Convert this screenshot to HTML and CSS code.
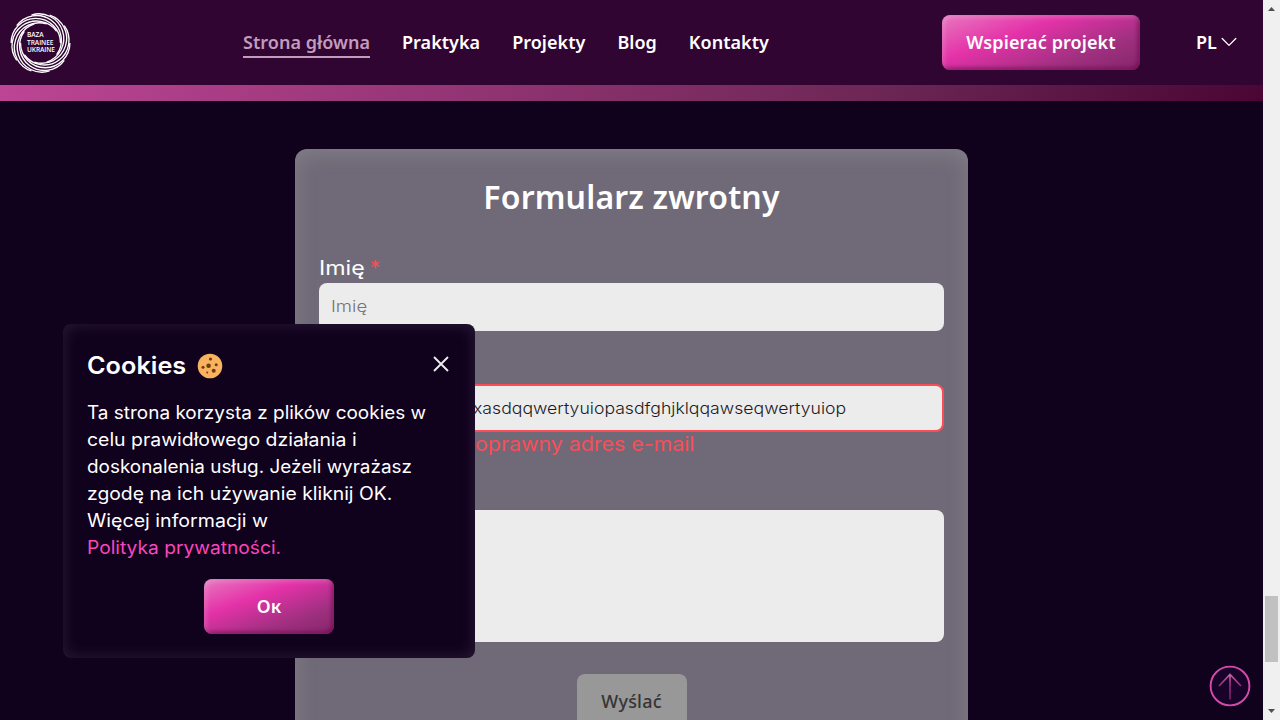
FILE: index.html
```html
<!DOCTYPE html>
<html lang="pl">
<head>
<meta charset="utf-8">
<title>Baza Trainee Ukraine</title>
<link rel="stylesheet" href="styles.css">
</head>
<body>
<div class="page">
  <header class="header">
    <svg class="logo" viewBox="0 0 60 60">
      <defs><path id="arc" d="M59.4 30A24.7 24.7 0 0 1 10 30"/></defs>
      <g fill="none" stroke="#fff" stroke-width="1.35">
        <use href="#arc"/>
        <use href="#arc" transform="rotate(36 30 30)"/>
        <use href="#arc" transform="rotate(72 30 30)"/>
        <use href="#arc" transform="rotate(108 30 30)"/>
        <use href="#arc" transform="rotate(144 30 30)"/>
        <use href="#arc" transform="rotate(180 30 30)"/>
        <use href="#arc" transform="rotate(216 30 30)"/>
        <use href="#arc" transform="rotate(252 30 30)"/>
        <use href="#arc" transform="rotate(288 30 30)"/>
        <use href="#arc" transform="rotate(324 30 30)"/>
      </g>
      <g class="logo-text">
        <text x="16.5" y="24" textLength="16.5">BAZA</text>
        <text x="16.5" y="31.8" textLength="26.5">TRAINEE</text>
        <text x="16.5" y="39.4" textLength="28">UKRAINE</text>
      </g>
    </svg>
    <nav class="nav">
      <a class="nav-link active">Strona główna</a>
      <a class="nav-link">Praktyka</a>
      <a class="nav-link">Projekty</a>
      <a class="nav-link">Blog</a>
      <a class="nav-link">Kontakty</a>
    </nav>
    <button class="btn btn-support">Wspierać projekt</button>
    <div class="lang"><span>PL</span>
      <svg width="16" height="10" viewBox="0 0 16 10" fill="none" stroke="#fff" stroke-width="1.3" stroke-linecap="round" stroke-linejoin="round"><path d="M1.2 1.5 8 8.4 14.8 1.5"/></svg>
    </div>
  </header>
  <div class="stripe"></div>
  <main class="main">
    <form class="form">
      <h1 class="form-title">Formularz zwrotny</h1>
      <label class="label"><span class="label-name">Imię</span><span class="required">*</span></label>
      <div class="field placeholder"><span class="field-name">Imię</span></div>
      <div class="field email"><span class="email-value">xasdqqwertyuiopasdfghjklqqawseqwertyuiop</span></div>
      <div class="error"><span class="error-text">oprawny adres e-mail</span></div>
      <div class="field message"></div>
      <button class="btn-send" type="button">Wyślać</button>
    </form>
  </main>
</div>
<aside class="scrollbar">
  <svg width="17" height="17" viewBox="0 0 17 17"><path d="M5 11 8.5 7 12 11Z" fill="#505050"/></svg>
  <div class="thumb"></div>
  <svg width="17" height="17" viewBox="0 0 17 17"><path d="M5 6 8.5 10 12 6Z" fill="#505050"/></svg>
</aside>
<section class="cookies">
  <div class="cookies-head">
    <h2 class="cookies-title"><span class="cookies-name">Cookies</span></h2>
    <svg class="cookie" width="26" height="26" viewBox="0 0 26 26">
      <circle cx="13" cy="13" r="12.3" fill="#f9b25f"/>
      <g fill="#6d3d0c"><circle cx="11.6" cy="12.7" r="2.3"/><circle cx="13.5" cy="6" r="1.6"/><circle cx="19.2" cy="11.8" r="1.5"/><circle cx="16.7" cy="17.7" r="2"/><circle cx="6" cy="14.2" r="1.5"/><circle cx="10.2" cy="19.6" r="1"/></g>
    </svg>
    <svg class="close" width="16" height="16" viewBox="0 0 16 16" fill="none" stroke="#ececec" stroke-width="1.9"><path d="M1 1 15 15M15 1 1 15"/></svg>
  </div>
  <p class="cookies-text">
    <span class="l1">Ta strona korzysta z plików cookies w</span>
    <span class="l2">celu prawidłowego działania i</span>
    <span class="l3">doskonalenia usług. Jeżeli wyrażasz</span>
    <span class="l4">zgodę na ich używanie kliknij OK.</span>
    <span class="l5">Więcej informacji w</span>
    <a class="l6">Polityka prywatności.</a>
  </p>
  <button class="btn btn-ok">Ок</button>
</section>
<a class="to-top">
  <svg width="42" height="42" viewBox="0 0 42 42" fill="none">
    <defs><linearGradient id="arrow" gradientUnits="userSpaceOnUse" x1="21" y1="9" x2="21" y2="35"><stop stop-color="#c765a8"/><stop offset=".4" stop-color="#9b2b80"/><stop offset="1" stop-color="#711b61"/></linearGradient></defs>
    <circle cx="21" cy="21" r="19.4" fill="#180229" stroke="#d44cab" stroke-width="1.9"/>
    <path d="M21 34.5V9.5M10 21 21 9.5 32 21" stroke="url(#arrow)" stroke-width="1.7"/>
  </svg>
</a>
</body>
</html>
```
FILE: styles.css
```css
* { box-sizing: border-box; }
body { margin: 0; height: 720px; overflow: hidden; display: flex; background: #10011d; color: #fff; font-family: "Noto Sans", sans-serif; }
.page { width: 1263px; height: 720px; overflow: hidden; }
.header { height: 85px; display: flex; align-items: center; background: #300532; padding-left: 10px; }
.logo { width: 61px; height: 60px; flex: none; overflow: visible; }
.logo-text { fill: #fff; font: 600 6.6px "Open Sans", sans-serif; }
.nav { display: flex; gap: 32px; margin-left: 172px; width: 699px; }
.nav-link { font-size: 18px; font-weight: 600; line-height: 28px; height: 30px; white-space: nowrap; letter-spacing: .03px; }
.active { color: #c39bbb; border-bottom: 2px solid #c39bbb; }
.btn { border: 0; border-radius: 8px; color: #fff; font: 600 18px/24px "Noto Sans", sans-serif; letter-spacing: .1px; height: 55px; padding: 0 0 2px; background: linear-gradient(160deg, #e878c0 0%, #e432a8 36%, #a03080 72%, #84266a 100%); box-shadow: inset 2px 2px 5px rgba(255,255,255,.22), inset -2px -2px 4px rgba(110,0,75,.7); }
.btn-support { width: 198px; flex: none; white-space: nowrap; }
.lang { display: flex; align-items: center; gap: 4px; margin: 0 0 1px 56px; font-size: 18px; font-weight: 600; }
.stripe { height: 16px; background: linear-gradient(135deg, #bd4595, #6c2655 70%, #4a0534); }
.main { padding-top: 48px; display: flex; justify-content: center; }
.form { width: 673px; height: 660px; padding: 24px; border-radius: 12px; background: #706a78; box-shadow: inset 0 4px 20px rgba(190,185,178,.26); display: flex; flex-direction: column; }
.form-title { margin: 0; height: 49px; font-size: 32px; font-weight: 600; line-height: 48px; text-align: center; letter-spacing: .17px; }
.label { margin-top: 32px; height: 29px; font: 400 20px/28px Inter, sans-serif; }
.label-name, .field-name, .email-value, .error-text, .cookies-name, .cookies-text > * { display: inline-block; transform-origin: 0 50%; }
.label-name { transform: scaleX(1.16); width: 51px; }
.required, .error { color: #fa4d57; }
.field { flex: none; height: 48px; border-radius: 8px; background: #ececec; padding: 0 12px; color: #1c1b25; font: 300 16px/47px Inter, sans-serif; white-space: nowrap; }
.placeholder { color: #757575; }
.field-name { transform: scaleX(1.16); }
.email { margin-top: 53px; border: 2px solid #fa4d57; line-height: 44px; padding-left: 152px; }
.email-value { transform: scaleX(1.103); }
.error { height: 24px; padding-left: 156px; font: 400 20px/24px Inter, sans-serif; }
.error-text { transform: scaleX(1.068); }
.message { height: 132px; margin-top: 54px; }
.btn-send { align-self: center; margin-top: 32px; width: 110px; height: 55px; flex: none; border: 0; border-radius: 8px; background: #989898; color: #353535; font: 500 18px/24px "Noto Sans", sans-serif; letter-spacing: .2px; padding: 0 0 1px; }
.scrollbar { width: 17px; height: 720px; background: #f0f0f0; display: flex; flex-direction: column; align-items: center; }
.thumb { width: 13px; height: 66px; margin: 579px 0 41px; background: #c1c1c1; }
.cookies { position: absolute; left: 63px; top: 324px; width: 412px; height: 334px; padding: 24px; border-radius: 8px; background: #10011d; box-shadow: inset 0 0 16px rgba(200,195,210,.15); display: flex; flex-direction: column; }
.cookies-head { height: 35px; display: flex; align-items: center; }
.cookies-title { margin: 0; width: 110px; font: 600 24px/35px Inter, sans-serif; }
.cookies-name { transform: scaleX(1.053); }
.close { margin: 0 2px 3px auto; }
.cookies-text { margin: 16px 0 0; height: 162px; font: 400 18px/27px Inter, sans-serif; display: flex; flex-direction: column; align-items: flex-start; white-space: nowrap; }
.l1 { transform: scaleX(1.053); }
.l2 { transform: scaleX(1.079); }
.l3 { transform: scaleX(1.05); }
.l4 { transform: scaleX(1.074); }
.l5 { transform: scaleX(1.088); }
.l6 { color: #fa46ba; transform: scaleX(1.066); }
.btn-ok { width: 130px; margin: 18px 0 0 117px; flex: none; }
.to-top { position: absolute; left: 1209px; top: 665px; width: 42px; height: 42px; }
```
